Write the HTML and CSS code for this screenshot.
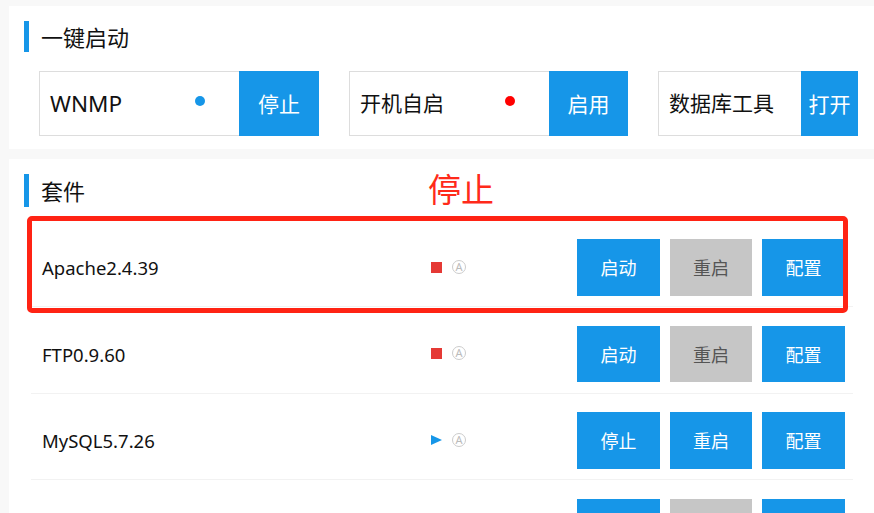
FILE: index.html
```html
<!DOCTYPE html>
<html lang="zh-CN">
<head>
    <meta charset="UTF-8">
    <title>一键启动</title>
    <link rel="stylesheet" href="styles.css">
</head>
<body>

    <section class="panel panel-quick">
        <h2 class="panel-title">一键启动</h2>
        <div class="quick-row">
            <div class="quick-item quick-wnmp">
                <div class="quick-label">
                    <span class="quick-latin">WNMP</span>
                    <i class="dot dot-on"></i>
                </div>
                <button class="quick-btn btn-wide">停止</button>
            </div>
            <div class="quick-item quick-boot">
                <div class="quick-label">
                    <span>开机自启</span>
                    <i class="dot dot-off"></i>
                </div>
                <button class="quick-btn btn-wide">启用</button>
            </div>
            <div class="quick-item quick-db">
                <div class="quick-label">
                    <span>数据库工具</span>
                </div>
                <button class="quick-btn btn-narrow">打开</button>
            </div>
        </div>
    </section>

    <section class="panel panel-suite">
        <h2 class="panel-title">套件</h2>
        <div class="suite-list">
            <div class="suite-row">
                <div class="suite-name">Apache2.4.39</div>
                <div class="suite-state"><i class="state-stop"></i><span class="state-auto">A</span></div>
                <div class="suite-actions">
                    <button class="act">启动</button>
                    <button class="act act-off">重启</button>
                    <button class="act">配置</button>
                </div>
            </div>
            <div class="suite-row">
                <div class="suite-name">FTP0.9.60</div>
                <div class="suite-state"><i class="state-stop"></i><span class="state-auto">A</span></div>
                <div class="suite-actions">
                    <button class="act">启动</button>
                    <button class="act act-off">重启</button>
                    <button class="act">配置</button>
                </div>
            </div>
            <div class="suite-row">
                <div class="suite-name">MySQL5.7.26</div>
                <div class="suite-state"><i class="state-run"></i><span class="state-auto">A</span></div>
                <div class="suite-actions">
                    <button class="act">停止</button>
                    <button class="act">重启</button>
                    <button class="act">配置</button>
                </div>
            </div>
            <!-- only the top of this row is in view, its labels are below the edge -->
            <div class="suite-row">
                <div class="suite-name"></div>
                <div class="suite-state"></div>
                <div class="suite-actions">
                    <button class="act"></button>
                    <button class="act act-off"></button>
                    <button class="act"></button>
                </div>
            </div>
        </div>

        <!-- annotation drawn over the screenshot -->
        <div class="note-text">停止</div>
        <div class="note-box"></div>
    </section>

</body>
</html>
```
FILE: styles.css
```css
html {
    overflow: hidden;
}

body {
    margin: 0;
    padding: 6px 0 0 9px;
    height: 513px;
    box-sizing: border-box;
    overflow: hidden;
    background-color: #f8f8f8;
    color: #111;
    font-family: "Noto Sans", "Noto Sans CJK SC", sans-serif;
}

.panel {
    background-color: #fff;
    padding: 15px 0 0 15px;
    box-sizing: border-box;
}

.panel-quick {
    height: 143px;
    margin-bottom: 10px;
}

.panel-suite {
    position: relative;
    height: 354px;
    overflow: hidden;
}

/* Section heading with blue bar */
.panel-title {
    margin: 0;
    height: 31px;
    line-height: 33px;
    padding-left: 12px;
    border-left: 5px solid #1696e8;
    font-size: 22px;
    font-weight: 400;
}

.panel-suite .panel-title {
    height: 33px;
    line-height: 35px;
}

.quick-row {
    display: flex;
    gap: 30px;
    margin: 19px 0 0 15px;
}

.quick-item {
    display: flex;
    height: 65px;
}

.quick-label {
    display: flex;
    align-items: center;
    justify-content: space-between;
    box-sizing: border-box;
    border: 1px solid #ddd;
    border-right: none;
    padding: 0 34px 3px 10px;
    font-size: 21px;
}

.quick-latin {
    margin-top: 3px;
    font-size: 22.5px;
}

.quick-wnmp .quick-label,
.quick-boot .quick-label {
    width: 200px;
}

.quick-db .quick-label {
    width: 143px;
    padding-right: 0;
}

.dot {
    width: 10px;
    height: 10px;
    border-radius: 50%;
    margin-top: -2px;
}

.dot-on {
    background-color: #1696e8;
}

.dot-off {
    background-color: #f00;
}

.quick-btn,
.act {
    border: none;
    padding: 0;
    background-color: #1696e8;
    color: #fff;
    font-family: inherit;
}

.quick-btn {
    font-size: 21px;
    padding-bottom: 2px;
}

.btn-wide {
    width: 80px;
}

.quick-boot .btn-wide {
    width: 79px;
}

.btn-narrow {
    width: 57px;
}

/* Suite table */
.suite-list {
    margin: 13.5px 0 0 7px;
    width: 822px;
}

.suite-row {
    display: flex;
    align-items: flex-start;
    box-sizing: border-box;
    height: 86.5px;
    padding-top: 18.5px;
    border-bottom: 1px solid #f2f2f2;
}

.suite-name {
    width: 389px;
    padding-left: 11px;
    line-height: 57px;
    font-size: 18.5px;
}

.suite-state {
    display: flex;
    align-items: center;
    gap: 10px;
    width: 146px;
    height: 56px;
}

.state-stop {
    width: 11px;
    height: 11px;
    background-color: #e53935;
}

.state-run {
    width: 0;
    height: 0;
    border-left: 11px solid #1696e8;
    border-top: 5.5px solid transparent;
    border-bottom: 5.5px solid transparent;
}

.state-auto {
    box-sizing: border-box;
    width: 14px;
    height: 14px;
    margin-top: -1px;
    border: 1px solid #ccc;
    border-radius: 50%;
    color: #bbb;
    font-size: 11px;
    line-height: 12px;
    text-align: center;
}

.suite-actions {
    display: flex;
    gap: 10px;
}

.act {
    width: 83px;
    height: 56.5px;
    font-size: 18px;
}

.act:nth-child(2) {
    width: 82px;
}

.act-off {
    background-color: #c6c6c6;
    color: #555;
}

/* Red annotation */
.note-text {
    position: absolute;
    left: 419px;
    top: 7px;
    color: #ff2a1a;
    font-size: 33px;
    line-height: 48px;
}

.note-box {
    position: absolute;
    left: 18px;
    top: 57px;
    width: 821px;
    height: 97px;
    box-sizing: border-box;
    border: 5px solid #ff2314;
    border-radius: 5px;
}
```
